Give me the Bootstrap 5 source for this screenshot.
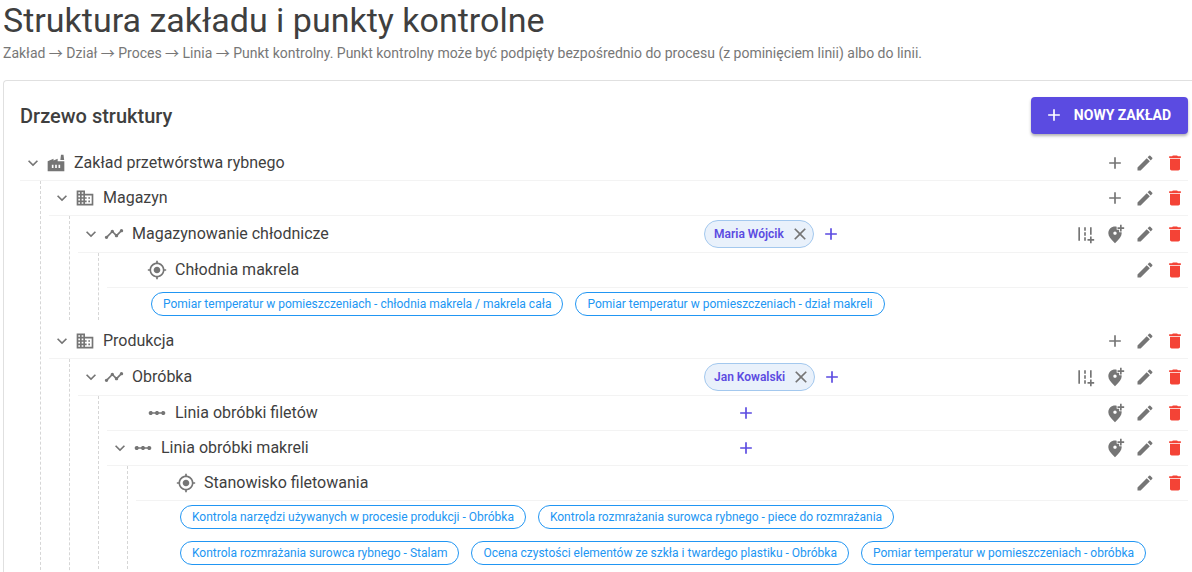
<!DOCTYPE html>
<html lang="pl">
<head>
<meta charset="utf-8">
<meta name="viewport" content="width=device-width, initial-scale=1">
<title>Struktura zakładu i punkty kontrolne</title>
<link rel="stylesheet" href="https://cdn.jsdelivr.net/npm/bootstrap@5.3.0/dist/css/bootstrap.min.css">
<style>
  body { font-family: Roboto, "Noto Sans CJK JP", "Liberation Sans", sans-serif; color: #3f3f3f; background: #fff; }
  .page { padding-left: 3px; }
  .page-title { font-size: 34px; line-height: 40px; font-weight: 400; margin-bottom: 4px; }
  .page-lead { font-size: 14px; line-height: 18px; color: #777; margin-bottom: 18px; }
  .tree-card { border-color: #e0e0e0; border-right: 0; border-radius: 4px 0 0 4px; color: inherit; }
  .card-heading { font-size: 20px; line-height: 32px; font-weight: 500; }
  .btn-new { --bs-btn-bg: #5b4be1; --bs-btn-border-color: #5b4be1; --bs-btn-color: #fff; --bs-btn-hover-bg: #4a3bc8; --bs-btn-hover-color: #fff;
    height: 37px; padding: 0 17px 2px 13px; gap: 10px; border: 0; border-radius: 4px; font-size: 14px; line-height: 24px; font-weight: 700;
    box-shadow: 0 2px 3px rgba(0,0,0,.3); }
  .ico { width: 20px; height: 20px; fill: #757575; flex: none; display: block; }
  .btn-new .ico { fill: #fff; }
  .tree { margin-top: 12px; }
  .tree-row { padding: 4px 0; border-bottom: 1px solid #f3f3f3; }
  .tree-main { flex: 0 1 626px; font-size: 16px; line-height: 24px; min-width: 0; }
  .tree-leaf { padding-left: 40px; }
  .tree-name { padding-left: 8px; }
  .tree-kids { margin-left: 20px; border-left: 1px dashed #d6d6d6; padding-left: 8px; }
  .kids-dept { margin-bottom: 4px; }
  .tree-node:last-child > .kids-dept { padding-bottom: 16px; }
  .act { width: 26px; height: 26px; padding: 3px; border: 0; background: none; border-radius: 50%; flex: none; }
  .act:hover { background: #f0f0f0; }
  .act-del .ico { fill: #f44336; }
  .act-add .ico { fill: #5b4be1; }
  .person { height: 28px; padding: 0 3px 0 9px; border: 1px solid #a3c8ee; border-radius: 14px; background: #e9f1fb;
    color: #5b4be1; font-size: 12px; line-height: 16px; font-weight: 600; }
  .person button { border: 0; background: none; padding: 0; margin-left: 6px; }
  .checks { padding: 4px 24px 4px 44px; gap: 12px; }
  .check-tag { height: 24px; padding: 0 11px; border: 1px solid #2196f3; border-radius: 12px; color: #2196f3; font-size: 12px; line-height: 22px; text-decoration: none; white-space: nowrap; }
</style>
</head>
<body class="overflow-hidden vh-100">
<svg class="d-none" xmlns="http://www.w3.org/2000/svg">
  <symbol id="i-plus" viewBox="0 0 24 24"><path d="M19 13h-6v6h-2v-6H5v-2h6V5h2v6h6z"/></symbol>
  <symbol id="i-close" viewBox="0 0 24 24"><path d="M19 6.41 17.59 5 12 10.59 6.41 5 5 6.41 10.59 12 5 17.59 6.41 19 12 13.41 17.59 19 19 17.59 13.41 12z"/></symbol>
  <symbol id="i-down" viewBox="0 0 24 24"><path d="M7.41 8.59 12 13.17l4.59-4.58L18 10l-6 6-6-6z"/></symbol>
  <symbol id="i-edit" viewBox="0 0 24 24"><path d="M3 17.25V21h3.75L17.81 9.94l-3.75-3.75zM20.71 7.04a.996.996 0 0 0 0-1.41l-2.34-2.34a.996.996 0 0 0-1.41 0l-1.83 1.83 3.75 3.75z"/></symbol>
  <symbol id="i-del" viewBox="0 0 24 24"><path d="M6 19c0 1.1.9 2 2 2h8c1.1 0 2-.9 2-2V7H6zM19 4h-3.5l-1-1h-5l-1 1H5v2h14z"/></symbol>
  <symbol id="i-road" viewBox="0 0 24 24"><path d="M20 18v-3h-2v3h-3v2h3v3h2v-3h3v-2zM18 4h2v9h-2zM4 4h2v16H4zm7 0h2v4h-2zm0 6h2v4h-2zm0 6h2v4h-2z"/></symbol>
  <symbol id="i-pin" viewBox="0 0 24 24"><path d="M20 1v3h3v2h-3v3h-2V6h-3V4h3V1zm-8 12c1.1 0 2-.9 2-2s-.9-2-2-2-2 .9-2 2 .9 2 2 2zm2-9.75V7h3v3h2.92c.05.39.08.79.08 1.2 0 3.32-2.67 7.25-8 11.8-5.33-4.55-8-8.48-8-11.8C4 6.22 7.8 3 12 3c.68 0 1.35.08 2 .25z"/></symbol>
  <symbol id="i-plant" viewBox="0 0 24 24"><path d="M22 10v12H2V10l7-3v2l5-2v3zm-4.800-1.500L18 2h3l.8 6.500zM11 18h2v-4h-2zm-4 0h2v-4H7zm10-4h-2v4h2z"/></symbol>
  <symbol id="i-dept" viewBox="0 0 24 24"><path d="M12 7V3H2v18h20V7zM6 19H4v-2h2zm0-4H4v-2h2zm0-4H4V9h2zm0-4H4V5h2zm4 12H8v-2h2zm0-4H8v-2h2zm0-4H8V9h2zm0-4H8V5h2zm10 12h-8v-2h2v-2h-2v-2h2v-2h-2V9h8zm-2-8h-2v2h2zm0 4h-2v2h2z"/></symbol>
  <symbol id="i-process" viewBox="0 0 24 24"><path d="M23 8c0 1.100-.9 2-2 2-.18 0-.35-.02-.51-.07l-3.560 3.550c.05.16.07.34.07.52 0 1.100-.9 2-2 2s-2-.9-2-2c0-.18.02-.36.07-.52l-2.550-2.550c-.16.05-.34.07-.52.07s-.36-.02-.52-.07l-4.550 4.560c.05.16.07.33.07.51 0 1.100-.9 2-2 2s-2-.9-2-2 .9-2 2-2c.18 0 .35.02.51.07l4.560-4.550C8.020 9.360 8 9.180 8 9c0-1.100.9-2 2-2s2 .9 2 2c0 .18-.02.36-.07.52l2.550 2.550c.16-.05.34-.07.52-.07s.36.02.52.07l3.550-3.560C19.020 8.350 19 8.180 19 8c0-1.100.9-2 2-2s2 .9 2 2z"/></symbol>
  <symbol id="i-point" viewBox="0 0 24 24"><path d="M12 8c-2.210 0-4 1.790-4 4s1.790 4 4 4 4-1.790 4-4-1.790-4-4-4zm8.940 3c-.46-4.170-3.770-7.480-7.940-7.940V1h-2v2.060C6.830 3.520 3.520 6.830 3.060 11H1v2h2.060c.46 4.170 3.770 7.480 7.940 7.940V23h2v-2.060c4.170-.46 7.480-3.770 7.940-7.940H23v-2zM12 19c-3.870 0-7-3.130-7-7s3.130-7 7-7 7 3.130 7 7-3.130 7-7 7z"/></symbol>
  <symbol id="i-line" viewBox="0 0 24 24"><path d="M19.500 9.500c-1.030 0-1.900.62-2.290 1.500h-2.920c-.39-.88-1.260-1.500-2.290-1.500s-1.900.62-2.290 1.500H6.790c-.39-.88-1.260-1.500-2.290-1.500C3.120 9.500 2 10.620 2 12s1.120 2.500 2.500 2.500c1.030 0 1.900-.62 2.290-1.500h2.920c.39.88 1.260 1.500 2.290 1.500s1.900-.62 2.290-1.500h2.920c.39.88 1.260 1.500 2.290 1.500 1.380 0 2.500-1.120 2.500-2.500s-1.120-2.500-2.500-2.500z"/></symbol>
</svg>

<main class="page">
  <h1 class="page-title">Struktura zakładu i punkty kontrolne</h1>
  <p class="page-lead">Zakład → Dział → Proces → Linia → Punkt kontrolny. Punkt kontrolny może być podpięty bezpośrednio do procesu (z pominięciem linii) albo do linii.</p>

  <section class="card tree-card ps-3 pe-1 pt-3">
    <header class="d-flex justify-content-between align-items-center">
      <h2 class="card-heading mb-0">Drzewo struktury</h2>
      <button type="button" class="btn btn-new d-inline-flex align-items-center"><svg class="ico" aria-hidden="true"><use href="#i-plus"/></svg>NOWY ZAKŁAD</button>
    </header>
    <div class="tree" id="tree"></div>
  </section>
</main>

<script src="https://cdn.jsdelivr.net/npm/bootstrap@5.3.0/dist/js/bootstrap.bundle.min.js"></script>
<script>
  const data = [{ type: 'plant', name: 'Zakład przetwórstwa rybnego', kids: [
    { type: 'dept', name: 'Magazyn', kids: [
      { type: 'process', name: 'Magazynowanie chłodnicze', person: 'Maria Wójcik', kids: [
        { type: 'point', name: 'Chłodnia makrela', checks: ['Pomiar temperatur w pomieszczeniach - chłodnia makrela / makrela cała', 'Pomiar temperatur w pomieszczeniach - dział makreli'] }
      ] }
    ] },
    { type: 'dept', name: 'Produkcja', kids: [
      { type: 'process', name: 'Obróbka', person: 'Jan Kowalski', kids: [
        { type: 'line', name: 'Linia obróbki filetów' },
        { type: 'line', name: 'Linia obróbki makreli', kids: [
          { type: 'point', name: 'Stanowisko filetowania', checks: [
            'Kontrola narzędzi używanych w procesie produkcji - Obróbka', 'Kontrola rozmrażania surowca rybnego - piece do rozmrażania',
            'Kontrola rozmrażania surowca rybnego - Stalam', 'Ocena czystości elementów ze szkła i twardego plastiku - Obróbka',
            'Pomiar temperatur w pomieszczeniach - obróbka'] }
        ] }
      ] }
    ] }
  ] }];
  const actions = { plant: ['plus'], dept: ['plus'], process: ['road', 'pin'], line: ['pin'], point: [] };
  const labels = { plus: 'Dodaj', road: 'Dodaj linię', pin: 'Dodaj punkt kontrolny', edit: 'Edytuj', del: 'Usuń', down: 'Zwiń' };
  const ico = n => `<svg class="ico" aria-hidden="true"><use href="#i-${n}"/></svg>`;
  const act = (n, c = '') => `<button type="button" class="act ${c}" aria-label="${labels[n]}">${ico(n)}</button>`;
  const node = n => {
    const assign = n.type === 'process' || n.type === 'line'
      ? (n.person ? `<span class="person d-inline-flex align-items-center">${n.person}<button type="button" aria-label="Usuń osobę">${ico('close')}</button></span>` : '') + act('plus', 'act-add') : '';
    return `<div class="tree-node">
      <div class="tree-row d-flex align-items-center">
        <div class="tree-main d-flex align-items-center ${n.kids ? '' : 'tree-leaf'}">${n.kids ? act('down') : ''}${ico(n.type)}<span class="tree-name">${n.name}</span></div>
        <div class="d-flex align-items-center gap-1">${assign}</div>
        <div class="d-flex gap-1 ms-auto">${actions[n.type].map(a => act(a)).join('')}${act('edit')}${act('del', 'act-del')}</div>
      </div>
      ${n.checks ? `<div class="checks d-flex flex-wrap">${n.checks.map(c => `<a href="#" class="check-tag">${c}</a>`).join('')}</div>` : ''}
      ${n.kids ? `<div class="tree-kids kids-${n.type}">${n.kids.map(node).join('')}</div>` : ''}
    </div>`;
  };
  document.getElementById('tree').innerHTML = data.map(node).join('');
</script>
</body>
</html>
